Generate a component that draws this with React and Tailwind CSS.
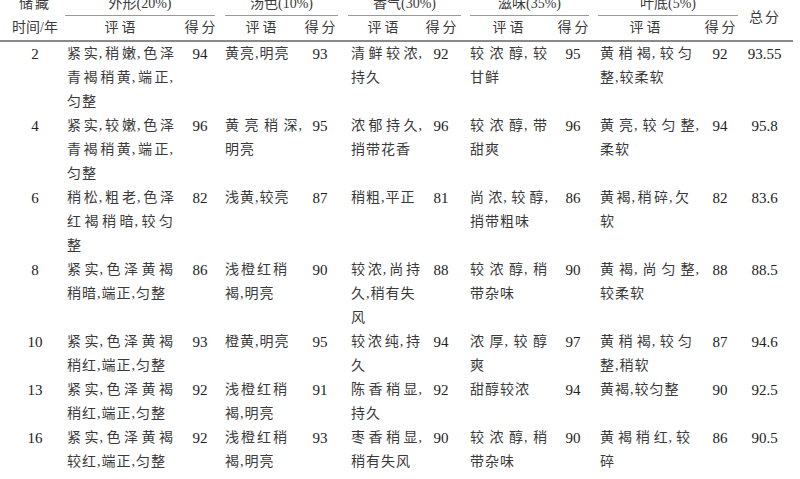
import React from "react";

const COLS =
  "grid grid-cols-[67px_113px_40px_82px_36px_84px_38px_96px_34px_110px_40px_53px]";

const rows = [
  {
    y: "2",
    a: [["紧实,稍嫩,色泽", "w-[108px]"], ["青褐稍黄,端正,", "w-[107px]"], "匀整"],
    as: "94",
    b: ["黄亮,明亮"],
    bs: "93",
    c: [["清鲜较浓,", "w-[72px]"], "持久"],
    cs: "92",
    d: [["较浓醇,较", "w-[78px]"], "甘鲜"],
    ds: "95",
    e: [["黄稍褐, 较匀", "w-[93px]"], "整,较柔软"],
    es: "92",
    t: "93.55",
  },
  {
    y: "4",
    a: [["紧实,较嫩,色泽", "w-[108px]"], ["青褐稍黄,端正,", "w-[107px]"], "匀整"],
    as: "96",
    b: [["黄亮稍深,", "w-[78px]"], "明亮"],
    bs: "95",
    c: [["浓郁持久,", "w-[72px]"], "捎带花香"],
    cs: "96",
    d: [["较浓醇,带", "w-[78px]"], "甜爽"],
    ds: "96",
    e: [["黄亮,较匀整,", "w-[100px]"], "柔软"],
    es: "94",
    t: "95.8",
  },
  {
    y: "6",
    a: [["稍松,粗老,色泽", "w-[108px]"], ["红褐稍暗, 较匀", "w-[107px]"], "整"],
    as: "82",
    b: ["浅黄,较亮"],
    bs: "87",
    c: ["稍粗,平正"],
    cs: "81",
    d: [["尚浓,较醇,", "w-[79px]"], "捎带粗味"],
    ds: "86",
    e: [["黄褐,稍碎,欠", "w-[90px]"], "软"],
    es: "82",
    t: "83.6",
  },
  {
    y: "8",
    a: [["紧实, 色泽黄褐", "w-[107px]"], "稍暗,端正,匀整"],
    as: "86",
    b: [["浅橙红稍", "w-[63px]"], "褐,明亮"],
    bs: "90",
    c: [["较浓,尚持", "w-[70px]"], "久,稍有失", "风"],
    cs: "88",
    d: [["较浓醇,稍", "w-[78px]"], "带杂味"],
    ds: "90",
    e: [["黄褐,尚匀整,", "w-[100px]"], "较柔软"],
    es: "88",
    t: "88.5",
  },
  {
    y: "10",
    a: [["紧实, 色泽黄褐", "w-[107px]"], "稍红,端正,匀整"],
    as: "93",
    b: ["橙黄,明亮"],
    bs: "95",
    c: [["较浓纯,持", "w-[70px]"], "久"],
    cs: "94",
    d: [["浓厚, 较醇", "w-[78px]"], "爽"],
    ds: "97",
    e: [["黄稍褐, 较匀", "w-[93px]"], "整,稍软"],
    es: "87",
    t: "94.6",
  },
  {
    y: "13",
    a: [["紧实, 色泽黄褐", "w-[107px]"], "稍红,端正,匀整"],
    as: "92",
    b: [["浅橙红稍", "w-[63px]"], "褐,明亮"],
    bs: "91",
    c: [["陈香稍显,", "w-[72px]"], "持久"],
    cs: "92",
    d: ["甜醇较浓"],
    ds: "94",
    e: ["黄褐,较匀整"],
    es: "90",
    t: "92.5",
  },
  {
    y: "16",
    a: [["紧实, 色泽黄褐", "w-[107px]"], "较红,端正,匀整"],
    as: "92",
    b: [["浅橙红稍", "w-[63px]"], "褐,明亮"],
    bs: "93",
    c: [["枣香稍显,", "w-[72px]"], "稍有失风"],
    cs: "90",
    d: [["较浓醇,稍", "w-[78px]"], "带杂味"],
    ds: "90",
    e: [["黄褐稍红,较", "w-[91px]"], "碎"],
    es: "86",
    t: "90.5",
  },
];

function Line({ l }) {
  if (typeof l === "string") {
    return <div className="whitespace-nowrap">{l}</div>;
  }
  const [t, w] = l;
  const units = [];
  for (const ch of t) {
    if (ch === " ") continue;
    if (ch === "," && units.length) units[units.length - 1] += ch;
    else units.push(ch);
  }
  return (
    <div className={"flex justify-between whitespace-nowrap " + w}>
      {units.map((u, i) => (
        <span key={i}>{u}</span>
      ))}
    </div>
  );
}

function Text({ lines, pad }) {
  return (
    <div className={"text-[14px] tracking-[1px] text-[#3a3a3a] " + pad}>
      {lines.map((l, i) => (
        <Line key={i} l={l} />
      ))}
    </div>
  );
}

function Num({ v, extra = "" }) {
  return (
    <div
      className={
        "text-center whitespace-nowrap text-[15px] text-[#222] " + extra
      }
    >
      {v}
    </div>
  );
}

function Group({ label, m }) {
  return (
    <div className="col-span-2 flex flex-col">
      <div
        className={
          "h-full flex items-center justify-center whitespace-nowrap border-b border-[#9a9a9a] " +
          m
        }
      >
        {label}
      </div>
    </div>
  );
}

function Head({ children, extra = "" }) {
  return (
    <div
      className={
        "flex items-center justify-center whitespace-nowrap tracking-[3px] pl-[3px] " +
        extra
      }
    >
      {children}
    </div>
  );
}

export default function App() {
  return (
    <div className="w-[800px] h-[479px] overflow-hidden bg-white font-['Liberation_Serif','Noto_Sans_CJK_SC',serif] text-[#3a3a3a] leading-[24px]">
      <div className="w-[793px] -mt-[8px]">
        {/* header */}
        <div className={COLS + " grid-rows-[24px_24px] text-[14px]"}>
          <div className="flex items-center justify-center whitespace-nowrap pl-[3px] tracking-[2px]">
            储藏
          </div>
          <Group label="外形(20%)" m="ml-[-2px] mr-[5px]" />
          <Group label="汤色(10%)" m="ml-[5px] mr-0" />
          <Group label="香气(30%)" m="ml-[10px] mr-[-1px]" />
          <Group label="滋味(35%)" m="ml-[10px] mr-[1px]" />
          <Group label="叶底(5%)" m="ml-[8px] mr-[2px]" />
          <div className="row-span-2 flex items-center justify-center whitespace-nowrap pt-[3px] pr-[3px] tracking-[2px]">
            总分
          </div>

          <div className="flex items-center justify-center whitespace-nowrap pl-[3px]">
            时间/年
          </div>
          <Head extra="pr-[7px]">评语</Head>
          <Head>得分</Head>
          <Head>评语</Head>
          <Head>得分</Head>
          <Head extra="pl-[9px]">评语</Head>
          <Head>得分</Head>
          <Head>评语</Head>
          <Head>得分</Head>
          <Head>评语</Head>
          <Head>得分</Head>
        </div>
        <div className="h-[2px] bg-[#8a8a8a]" />

        {/* body */}
        {rows.map((r) => (
          <div key={r.y} className={COLS}>
            <Num v={r.y} extra="pl-[3px]" />
            <Text lines={r.a} pad="" />
            <Num v={r.as} />
            <Text lines={r.b} pad="pl-[5px]" />
            <Num v={r.bs} />
            <Text lines={r.c} pad="pl-[13px]" />
            <Num v={r.cs} />
            <Text lines={r.d} pad="pl-[10px]" />
            <Num v={r.ds} />
            <Text lines={r.e} pad="pl-[10px]" />
            <Num v={r.es} />
            <Num v={r.t} extra="pr-[4px]" />
          </div>
        ))}
      </div>
    </div>
  );
}
